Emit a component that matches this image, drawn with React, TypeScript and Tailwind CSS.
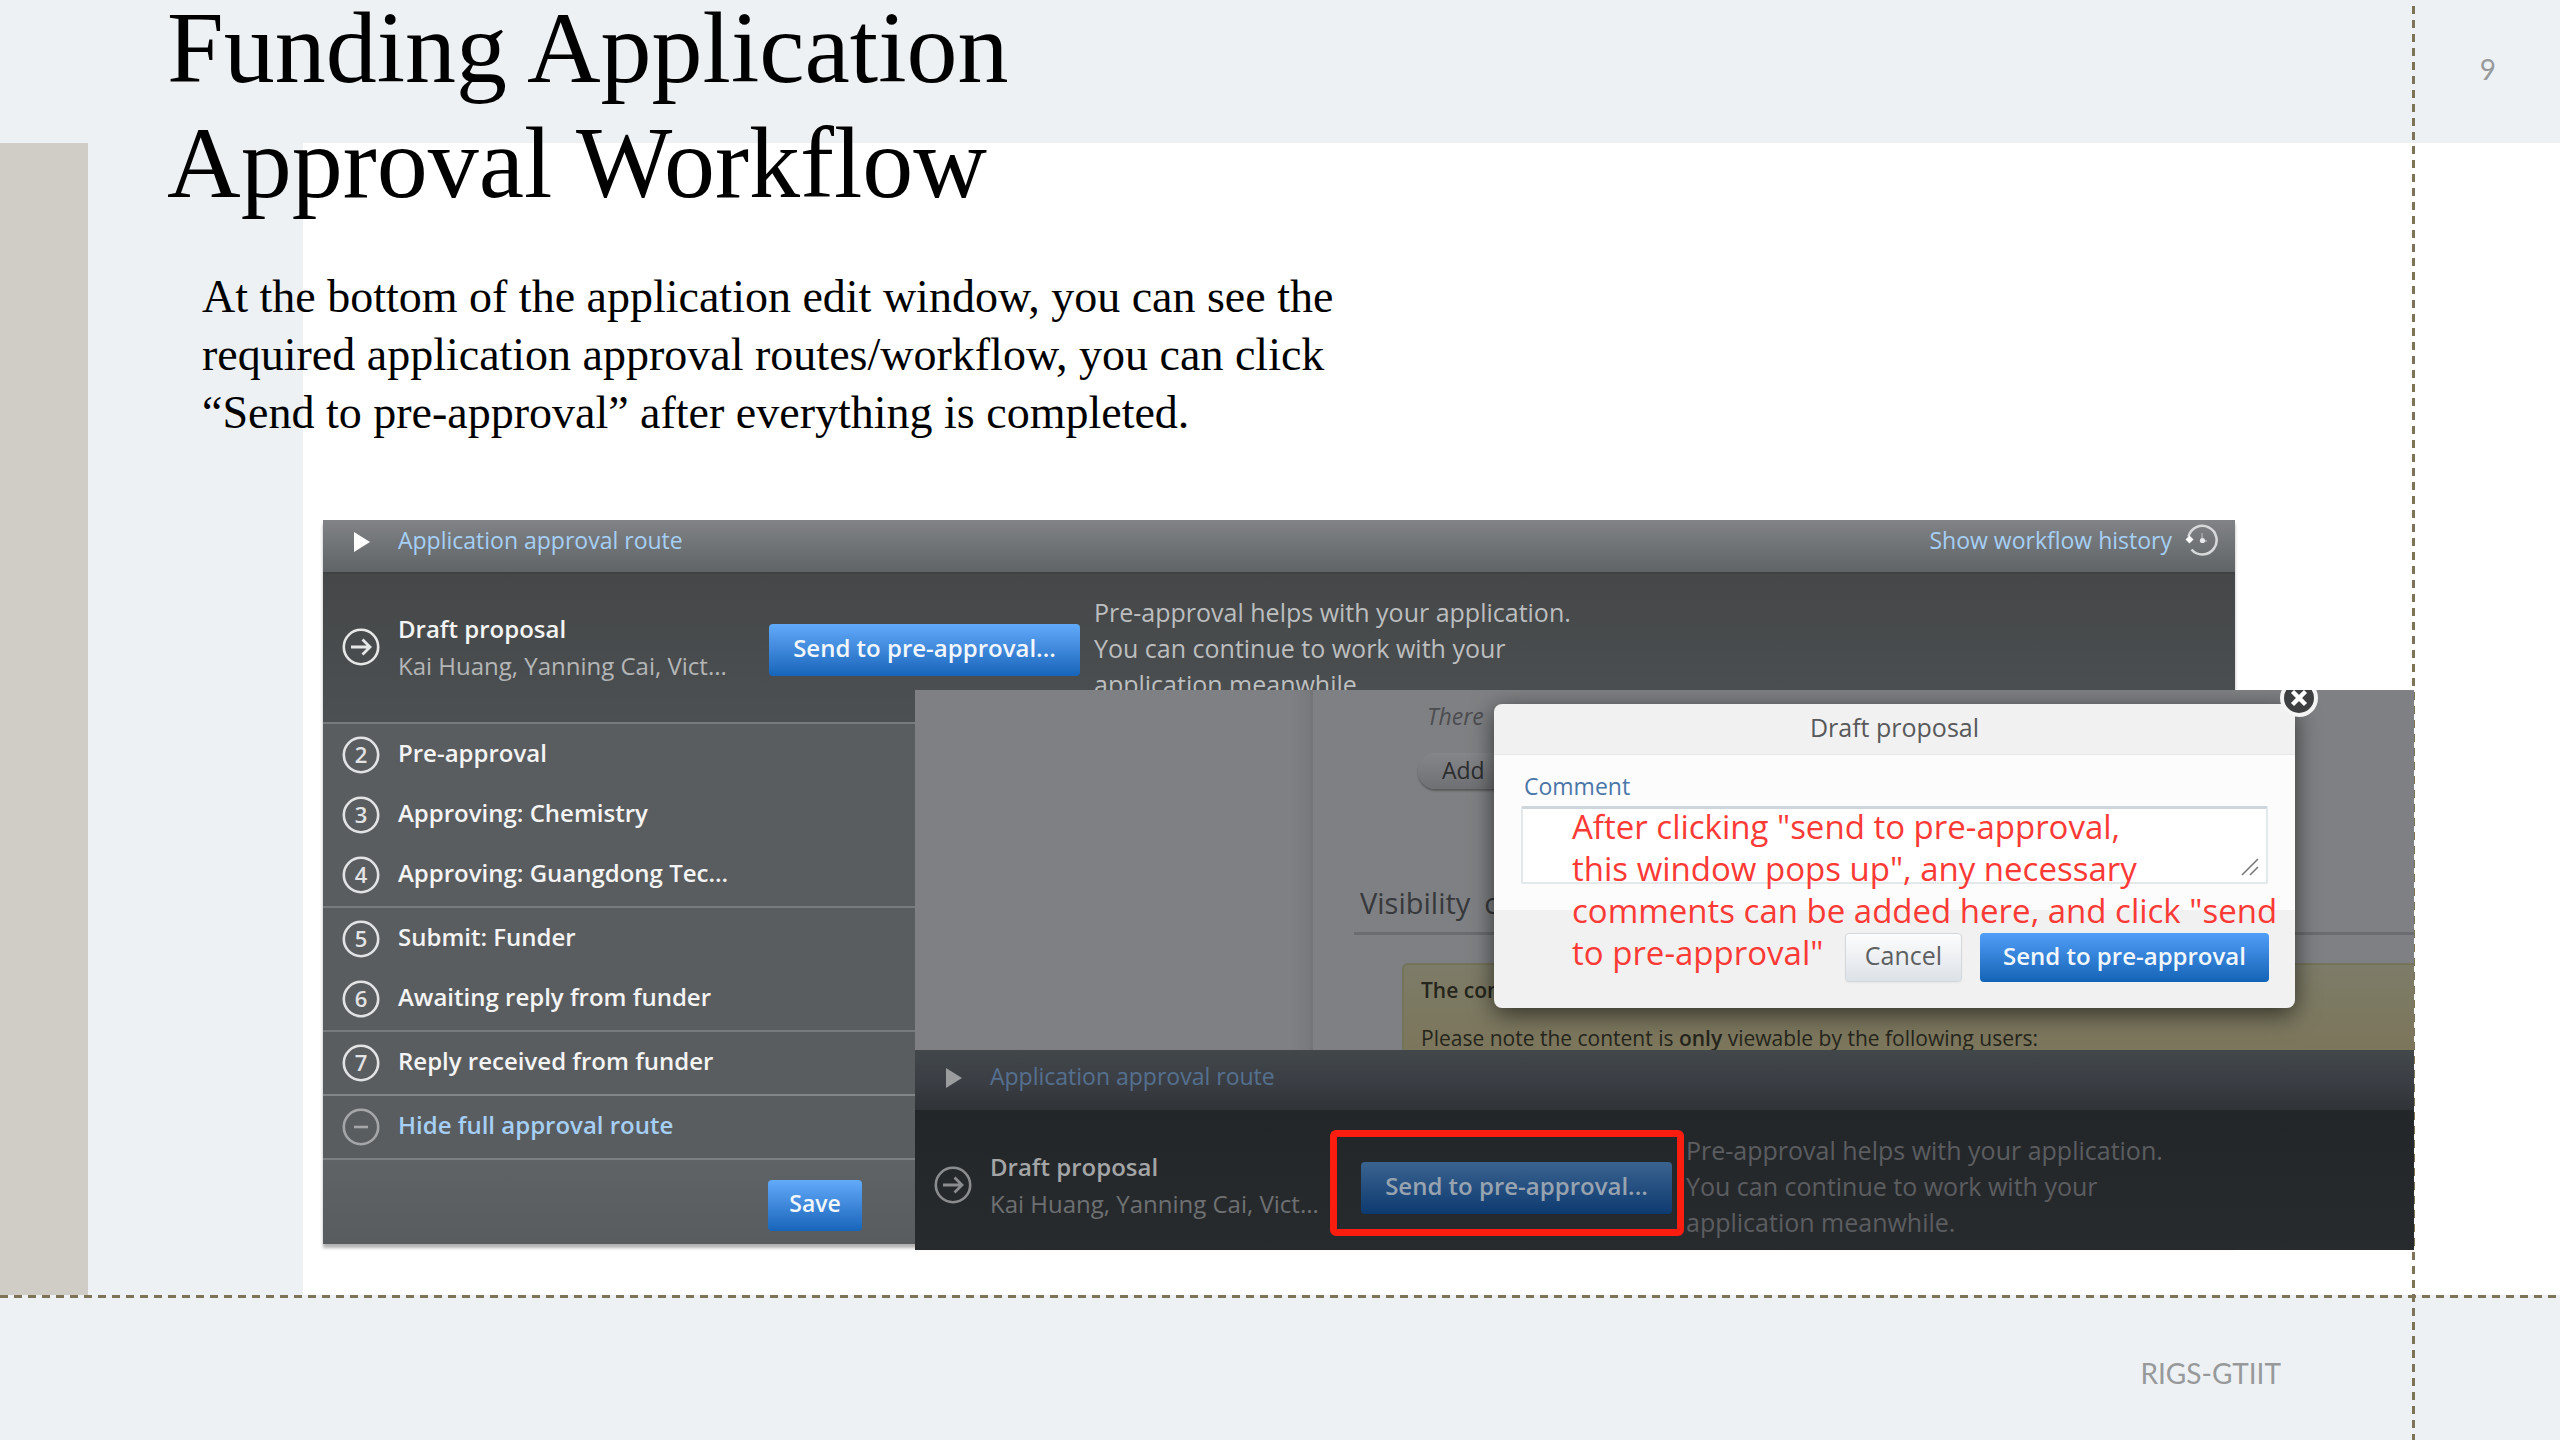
import React from 'react';
import { clsx } from 'clsx';

const steps = [
  [
    { number: 2, label: 'Pre-approval' },
    { number: 3, label: 'Approving: Chemistry' },
    { number: 4, label: 'Approving: Guangdong Tec...' },
  ],
  [
    { number: 5, label: 'Submit: Funder' },
    { number: 6, label: 'Awaiting reply from funder' },
  ],
  [{ number: 7, label: 'Reply received from funder' }],
];

const StepCircle = ({ children }: { children: React.ReactNode }) => (
  <svg viewBox="0 0 38 38" className="size-[38px] shrink-0" fill="none" stroke="currentColor" aria-hidden="true">
    <circle cx="19" cy="19" r="17.2" strokeWidth="2.6" />
    {children}
  </svg>
);

const HistoryIcon = () => (
  <svg viewBox="0 0 34 34" className="size-[34px] shrink-0" fill="none" stroke="#d6d8d9" aria-hidden="true">
    <path d="M3.5 13.5 A14.3 14.3 0 1 1 6.5 26.5" strokeWidth="2.6" />
    <path d="M0.5 16.5 L4.5 12.5 L8.5 16.5 L4.5 20.5 Z" fill="#fff" stroke="none" />
    <path d="M17 10 V18 H22" stroke="#a9abad" strokeWidth="1.5" />
    <circle cx="17.5" cy="17.5" r="2.6" fill="#e8e9ea" stroke="none" />
  </svg>
);

const RouteHeader = ({ dimmed = false }: { dimmed?: boolean }) => (
  <div
    className={clsx(
      'flex items-start justify-between pr-4',
      dimmed
        ? 'h-[60px] bg-linear-to-b from-[#42474a] via-[#3b3f45] to-[#303337] pt-2'
        : 'h-[54px] border-b-2 border-[#3f4243] bg-linear-to-b from-[#818386] to-[#606467] pt-0.5',
    )}
  >
    <button type="button" className={clsx('flex items-center pl-[31px] text-[23px] leading-9', dimmed ? 'text-[#55708f]' : 'text-[#a5cff5]')}>
      <svg viewBox="0 0 16 20" className={clsx('mt-1 mr-7 h-5 w-4', dimmed ? 'fill-[#9a9c9e]' : 'fill-white')} aria-hidden="true">
        <path d="M0 0 L16 10 L0 20 Z" />
      </svg>
      Application approval route
    </button>
    {!dimmed && (
      <a href="#history" className="flex items-center gap-[13px] text-[23px] leading-9 text-[#a5cff5]">
        Show workflow history
        <HistoryIcon />
      </a>
    )}
  </div>
);

const DraftRow = ({ dimmed = false }: { dimmed?: boolean }) => (
  <div
    className={clsx(
      'flex items-start pl-[19px]',
      dimmed ? 'h-[140px] bg-linear-to-b from-[#232629] to-[#282b2e] pt-[22px]' : 'h-[148px] bg-linear-to-b from-[#454748] to-[#4c5052] pt-5',
    )}
  >
    <div className={clsx('flex w-[427px] items-center gap-[18px] pt-4', dimmed ? 'text-[#8a8c8e]' : 'text-[#e6e7e7]')}>
      <StepCircle>
        <path d="M9 19 H28 M20.5 11.5 L28 19 L20.5 26.5" strokeWidth="2.8" />
      </StepCircle>
      <div className="text-2xl leading-[37px]">
        <div className={clsx('leading-[37px] font-semibold', dimmed ? 'text-[#a4a5a6]' : 'text-[#f4f4f4]')}>Draft proposal</div>
        <div className={clsx('leading-[37px]', dimmed ? 'text-[#6e7072]' : 'text-[#b4b6b7]')}>Kai Huang, Yanning Cai, Vict...</div>
      </div>
    </div>
    <div className="relative mt-[30px]">
      <button
        type="button"
        className={clsx(
          'h-[52px] w-[311px] rounded-sm pb-1 text-2xl font-semibold',
          dimmed
            ? 'bg-linear-to-b from-[#3a638f] to-[#0c3a70] text-[#98a3b0]'
            : 'bg-linear-to-b from-[#62aafa] to-[#1565ba] text-[#f2f7fd]',
        )}
      >
        Send to pre-approval...
      </button>
      {dimmed && <div className="absolute -top-8 -right-3 -bottom-[22px] -left-[31px] rounded-md border-[7px] border-[#fb1d10]" />}
    </div>
    <p className={clsx('w-[520px] pl-[14px] text-[25px] leading-9', dimmed ? 'text-[#5b5d60]' : 'text-[#bcbebf]')}>
      Pre-approval helps with your application.
      <br />
      You can continue to work with your
      <br />
      application meanwhile.
    </p>
  </div>
);

const RoutePanel = () => (
  <div className="col-start-1 row-start-1 mr-[325px] ml-[323px] self-start bg-[#5a5d60] shadow-[0_4px_3px_rgba(0,0,0,0.3)]">
    <RouteHeader />
    <DraftRow />
    {steps.map((group) => (
      <ul key={group[0].number} className="border-t-2 border-[#787b7d] py-px">
        {group.map((step) => (
          <li key={step.number} className="flex h-[60px] items-center gap-[18px] pl-[19px] text-[#e2e3e4]">
            <StepCircle>
              <text x="19" y="27" textAnchor="middle" fill="currentColor" stroke="none" className="text-[22px] font-semibold">
                {step.number}
              </text>
            </StepCircle>
            <span className="pb-1 text-2xl font-semibold text-[#f4f4f4]">{step.label}</span>
          </li>
        ))}
      </ul>
    ))}
    <button type="button" className="flex h-16 w-full items-center gap-[18px] border-t-2 border-[#828587] pl-[19px] text-[#a4a6a8]">
      <StepCircle>
        <path d="M12 19 H26" strokeWidth="2.6" />
      </StepCircle>
      <span className="pb-1 text-2xl font-semibold text-[#a5cff5]">Hide full approval route</span>
    </button>
    <div className="h-[86px] border-t-2 border-[#7c7f81] bg-linear-to-b from-[#606365] to-[#595c5e] pt-5 pl-[445px]">
      <button type="button" className="h-[51px] w-[94px] rounded-sm bg-linear-to-b from-[#62aafa] to-[#1565ba] pb-1 text-[23px] font-semibold text-[#f2f7fd]">
        Save
      </button>
    </div>
  </div>
);

const CommentDialog = () => (
  <div role="dialog" aria-label="Draft proposal" className="absolute top-[14px] right-[119px] left-[579px] rounded-lg bg-[#f1f1f1] shadow-[0_6px_24px_rgba(0,0,0,0.6)]">
    <h2 className="h-[50px] pt-[5px] text-center text-[25px] leading-9 text-[#58595b]">Draft proposal</h2>
    <div className="h-[156px] border-t border-[#e9e9e9] bg-[#fcfcfd] px-[27px] pt-[13px]">
      <label htmlFor="comment" className="block px-[3px] pb-0.5 text-[23px] leading-9 text-[#4a76a8]">Comment</label>
      <div className="relative">
        <textarea id="comment" className="block h-[78px] w-full resize-none rounded-xs border-2 border-t-[3px] border-[#e3e8eb] border-t-[#ced6dc] bg-white" />
        <svg viewBox="0 0 20 20" className="absolute right-2 bottom-[6px] size-5" stroke="#777" strokeWidth="1.6" aria-hidden="true">
          <path d="M2 17 L18 1 M10 17 L18 9" />
        </svg>
      </div>
    </div>
    <div className="flex h-[98px] items-start justify-end gap-[18px] pt-[23px] pr-[26px]">
      <button type="button" className="h-[49px] w-[117px] rounded-sm border border-[#d3d8dd] bg-linear-to-b from-[#fdfdfd] to-[#dde2e8] pb-1 text-[25px] text-[#5d5f61] shadow-xs">
        Cancel
      </button>
      <button type="button" className="h-[49px] w-[289px] rounded-sm bg-linear-to-b from-[#4f9ef8] to-[#1264b6] pb-1 text-2xl font-semibold text-[#f2f7fd]">
        Send to pre-approval
      </button>
    </div>
    <p className="absolute top-[102px] left-[78px] text-[33px] leading-[42px] whitespace-nowrap text-[#fb3a35]">
      After clicking "send to pre-approval,
      <br />
      this window pops up", any necessary
      <br />
      comments can be added here, and click "send
      <br />
      to pre-approval"
    </p>
    <button type="button" aria-label="Close" className="absolute -top-[26px] -right-6">
      <svg viewBox="0 0 40 40" className="size-10" aria-hidden="true">
        <circle cx="20" cy="20" r="17" fill="#3e3f41" stroke="#f4f4f4" strokeWidth="4" />
        <path d="M13.5 13.5 L26.5 26.5 M26.5 13.5 L13.5 26.5" stroke="#fff" strokeWidth="4.4" />
      </svg>
    </button>
  </div>
);

const DialogPanel = () => (
  <div className="relative col-start-1 row-start-1 mt-[170px] mr-[146px] ml-[915px] self-start overflow-hidden bg-[#7f8083]">
    <div className="flex h-[360px]">
      <div className="w-[398px] border-r-[3px] border-[#747578] bg-linear-to-r from-[#7f8083] from-95% to-[#78797c]" />
      <div className="flex-1 pt-2 pl-[41px]">
        <p className="pl-[73px] text-[23px] leading-9 text-[#4c4d50] italic">There</p>
        <button type="button" className="mt-[19px] ml-16 block h-9 w-40 rounded-full bg-linear-to-b from-[#858689] to-[#6f7073] pb-1 pl-6 text-left text-[23px] text-[#2c2d2f] shadow-[0_2px_2px_rgba(0,0,0,0.3)]">
          Add
        </button>
        <h3 className="mt-[90px] flex gap-[14px] border-b-[3px] border-[#6b6c6f] pb-[6px] pl-[6px] text-[29px] leading-[47px] text-[#36383b]">
          <span>Visibility</span>
          <span>o</span>
        </h3>
        <div className="mt-[28px] ml-12 h-[122px] rounded-tl-md border-t-2 border-l-2 border-[#74745a] bg-linear-to-b from-[#7d7c68] to-[#7b7355] pt-[7px] pl-[17px] text-[21px] text-[#25251c]">
          <p className="h-12 leading-9 font-semibold">The con</p>
          <p className="leading-9">
            Please note the content is <span className="font-semibold">only</span> viewable by the following users:
          </p>
        </div>
      </div>
    </div>
    <div className="relative">
      <RouteHeader dimmed />
      <DraftRow dimmed />
    </div>
    <CommentDialog />
  </div>
);

const App: React.FC = () => {
  return (
    <main className="relative min-h-screen overflow-hidden bg-white font-['Open_Sans',sans-serif]">
      {/* Slide background bands */}
      <div className="absolute inset-0 flex flex-col">
        <div className="h-[143px] bg-[#edf1f4]" />
        <div className="flex flex-1">
          <div className="w-[88px] bg-[#d0ccc6]" />
          <div className="w-[215px] bg-[#edf1f4]" />
        </div>
        <svg className="h-[3px] w-full bg-[#edf1f4]" aria-hidden="true">
          <line x1="0" y1="1.5" x2="100%" y2="1.5" stroke="#7d7458" strokeWidth="3" strokeDasharray="8 6" />
        </svg>
        <div className="h-[142px] bg-[#edf1f4]" />
      </div>
      <svg className="absolute inset-y-0 right-[145px] h-full w-[3px]" aria-hidden="true">
        <line x1="1.5" y1="6" x2="1.5" y2="100%" stroke="#7d7458" strokeWidth="3" strokeDasharray="8 6" />
      </svg>

      <div className="relative flex min-h-screen flex-col">
        <header className="flex items-start justify-between pr-16 pl-[167px] text-black">
          <h1 className="-mt-2.5 font-['Liberation_Serif',serif] text-[102px] leading-[115px]">
            Funding Application
            <br />
            Approval Workflow
          </h1>
          <span className="pt-[49px] font-['Lato',sans-serif] text-[28px] leading-10 text-[#97999b]">9</span>
        </header>
        <p className="mt-12 ml-[202px] font-['Liberation_Serif',serif] text-[46px] leading-[58px] text-black">
          At the bottom of the application edit window, you can see the
          <br />
          required application approval routes/workflow, you can click
          <br />
          “Send to pre-approval” after everything is completed.
        </p>
        <div className="mt-[78px] grid">
          <RoutePanel />
          <DialogPanel />
        </div>
        <footer className="mt-auto pr-[279px] pb-[47px] text-right font-['Lato',sans-serif] text-[28px] leading-10 text-[#97999b]">RIGS-GTIIT</footer>
      </div>
    </main>
  );
};

export default App;
